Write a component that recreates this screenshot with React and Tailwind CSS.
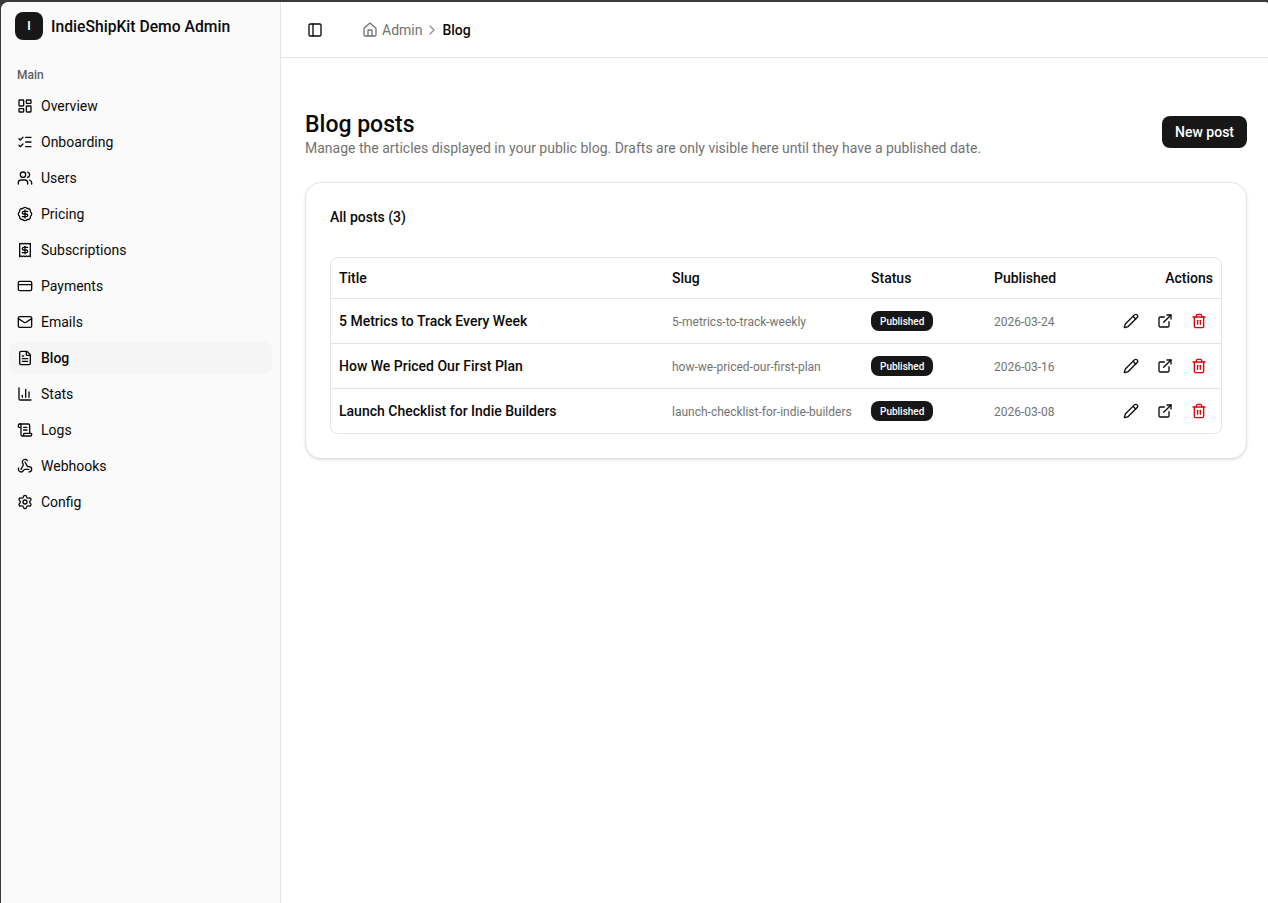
import React from "react";
import {
  LayoutDashboard, ListChecks, Users, BadgeDollarSign, Receipt, CreditCard, Mail, FileText,
  ChartColumn, ScrollText, Webhook, Settings, PanelLeft, House, ChevronRight, Pencil, ExternalLink, Trash2,
} from "lucide-react";

const nav = [
  ["Overview", LayoutDashboard],
  ["Onboarding", ListChecks],
  ["Users", Users],
  ["Pricing", BadgeDollarSign],
  ["Subscriptions", Receipt],
  ["Payments", CreditCard],
  ["Emails", Mail],
  ["Blog", FileText],
  ["Stats", ChartColumn],
  ["Logs", ScrollText],
  ["Webhooks", Webhook],
  ["Config", Settings],
];

const posts = [
  ["5 Metrics to Track Every Week", "5-metrics-to-track-weekly", "2026-03-24"],
  ["How We Priced Our First Plan", "how-we-priced-our-first-plan", "2026-03-16"],
  ["Launch Checklist for Indie Builders", "launch-checklist-for-indie-builders", "2026-03-08"],
];

export default function App() {
  return (
    <div className="h-[903px] w-[1268px] overflow-hidden bg-[#3a3a3a] pt-[2px] pl-px font-['Roboto',sans-serif] text-[#0a0a0a]">
      <div className="flex h-[901px] overflow-hidden rounded-tl-lg rounded-tr-[2px] bg-white">
        <aside className="w-[280px] shrink-0 border-r border-[#e5e5e5] bg-[#fafafa]">
          <div className="flex h-[48px] items-center gap-2 pl-[14px]">
            <div className="flex h-7 w-7 items-center justify-center rounded-lg bg-[#171717] text-xs font-semibold text-white">I</div>
            <span className="pt-[2px] text-[15.7px] font-medium">IndieShipKit Demo Admin</span>
          </div>
          <div className="px-2 pt-[8px]">
            <div className="flex h-8 items-center px-2 pt-[2px] text-xs font-medium text-[#5f5f5f]">Main</div>
            <ul className="flex flex-col gap-1">
              {nav.map(([label, Icon]) => {
                const active = label === "Blog";
                return (
                  <li key={label} className={`flex h-8 items-center gap-2 rounded-lg px-2 text-sm ${active ? "bg-[#f5f5f5] font-medium" : ""}`}>
                    <Icon className="h-4 w-4 shrink-0" strokeWidth={2} />
                    <span>{label}</span>
                  </li>
                );
              })}
            </ul>
          </div>
        </aside>
        <main className="min-w-0 flex-1">
          <header className="flex h-[56px] items-center border-b border-[#e5e5e5] pl-[26px]">
            <PanelLeft className="h-4 w-4" />
            <nav className="ml-[39px] flex items-center text-sm">
              <House className="h-4 w-4 text-[#737373]" />
              <span className="ml-1 text-[#737373]">Admin</span>
              <ChevronRight className="mx-[2px] h-4 w-4 text-[#8a8a8a]" strokeWidth={1.75} />
              <span className="font-medium">Blog</span>
            </nav>
          </header>
          <div className="pt-[54px] pr-[21px] pl-6">
            <div className="flex items-start justify-between">
              <div>
                <h1 className="pt-px text-[23px] leading-[24px] font-medium">Blog posts</h1>
                <p className="mt-px text-sm leading-5 text-[#737373]">Manage the articles displayed in your public blog. Drafts are only visible here until they have a published date.</p>
              </div>
              <button className="mt-1 h-8 rounded-lg bg-[#171717] px-[13px] text-sm font-medium text-white">New post</button>
            </div>
            <section className="mt-[24px] rounded-2xl border border-[#e5e5e5] bg-white p-6 shadow-sm">
              <h2 className="text-sm leading-5 font-medium">All posts (3)</h2>
              <div className="mt-[30px] overflow-hidden rounded-lg border border-[#e5e5e5]">
                <table className="w-full table-fixed text-sm">
                  <thead>
                    <tr className="h-10 border-b border-[#e5e5e5] font-medium">
                      <th className="w-[333px] px-2 text-left font-medium">Title</th>
                      <th className="w-[199px] px-2 text-left font-medium">Slug</th>
                      <th className="w-[123px] px-2 text-left font-medium">Status</th>
                      <th className="px-2 text-left font-medium">Published</th>
                      <th className="px-2 text-right font-medium">Actions</th>
                    </tr>
                  </thead>
                  <tbody>
                    {posts.map(([title, slug, date], i) => (
                      <tr key={slug} className={`h-[45px] ${i < 2 ? "border-b border-[#e5e5e5]" : ""}`}>
                        <td className="px-2 font-medium">{title}</td>
                        <td className="px-2 pt-[2px] text-xs whitespace-nowrap text-[#737373]">{slug}</td>
                        <td className="px-2">
                          <span className="inline-flex h-5 items-center rounded-lg bg-[#171717] px-[9px] pt-[2px] text-[10px] font-medium text-white">Published</span>
                        </td>
                        <td className="px-2 pt-[2px] text-xs text-[#737373]">{date}</td>
                        <td className="pr-[5px] pl-2">
                          <div className="flex items-center justify-end">
                            <span className="flex h-[34px] w-[34px] items-center justify-center"><Pencil className="h-4 w-4" /></span>
                            <span className="flex h-[34px] w-[34px] items-center justify-center"><ExternalLink className="h-4 w-4" /></span>
                            <span className="flex h-[34px] w-[34px] items-center justify-center text-[#e7000b]"><Trash2 className="h-4 w-4" /></span>
                          </div>
                        </td>
                      </tr>
                    ))}
                  </tbody>
                </table>
              </div>
            </section>
          </div>
        </main>
      </div>
    </div>
  );
}
